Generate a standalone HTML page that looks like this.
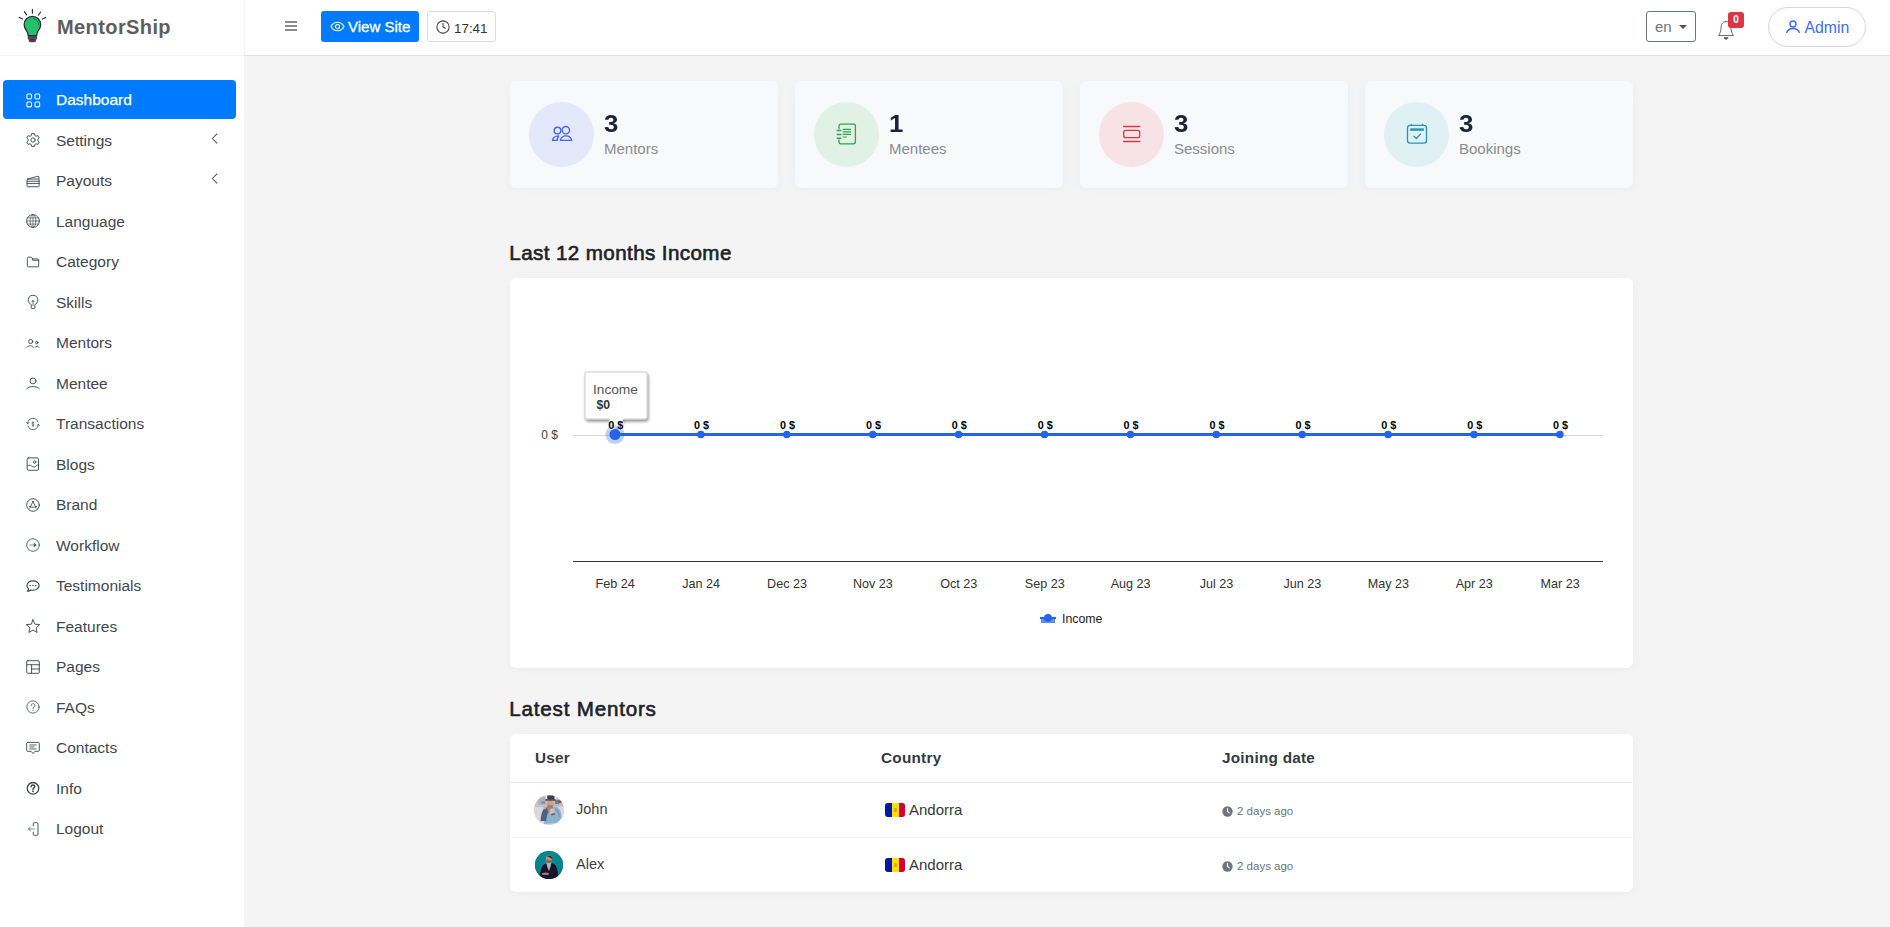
<!DOCTYPE html>
<html lang="en">
<head>
<meta charset="utf-8">
<title>MentorShip - Dashboard</title>
<style>
*{box-sizing:border-box;margin:0;padding:0}
html,body{width:1890px;height:927px;overflow:hidden}
body{font-family:"Liberation Sans",sans-serif;background:#f4f4f4;color:#212529;position:relative}
.sidebar{position:absolute;left:0;top:0;width:245px;height:927px;background:#fff;border-right:1px solid #f3f3f3}
.brand{position:absolute;left:0;top:0;width:244px;height:56px;border-bottom:1px solid #f2f2f2}
.brand svg{position:absolute;left:10px;top:0}
.brand .name{position:absolute;left:57px;top:14px;font-size:20px;font-weight:700;color:#5e5e5e;letter-spacing:.4px;line-height:26px}
.nav{position:absolute;left:3px;top:80px;width:233px;list-style:none}
.nav li{height:39px;margin-bottom:1.5px;border-radius:4px;position:relative;color:#3f474e;font-size:15.5px;line-height:40px;padding-left:53px}
.nav li.active{background:#007bff;color:#fff;-webkit-text-stroke:.25px #fff}
.nav li svg.ic{position:absolute;left:22.500px;top:12.500px;width:14px;height:14px;overflow:visible}
.nav li .arr{position:absolute;right:17.500px;top:12px;width:7.300px;height:11px}
.topbar{position:absolute;left:245px;top:0;width:1645px;height:56px;background:#fff;border-bottom:1px solid #dee2e6}
.burger{position:absolute;left:39px;top:20px}
.btn-view{position:absolute;left:76px;top:11px;width:98px;height:31px;background:#007bff;color:#fff;border-radius:3px;font-size:15px;line-height:31px;padding-left:27px;-webkit-text-stroke:.3px #fff}
.btn-view svg{position:absolute;left:9px;top:8px}
.btn-time{position:absolute;left:182px;top:11px;width:69px;height:31px;border:1px solid #d9dcdf;border-radius:3px;font-size:13.400px;line-height:33px;padding-left:26px;color:#333}
.btn-time svg{position:absolute;left:8px;top:8px}
.lang{position:absolute;left:1401px;top:11px;width:50px;height:31px;border:1px solid #6c757d;border-radius:3px;font-size:15px;color:#6c757d;line-height:30px;padding-left:8px}
.lang:after{content:"";position:absolute;left:32px;top:12.500px;border-left:4px solid transparent;border-right:4px solid transparent;border-top:4px solid #555}
.bell{position:absolute;left:1472px;top:19.500px}
.badge{position:absolute;left:1483px;top:12px;width:16px;height:16px;background:#dc3545;border-radius:3px;color:#fff;font-size:10px;font-weight:700;text-align:center;line-height:15px}
.admin{position:absolute;left:1523px;top:7px;width:98px;height:40px;border:1px solid #d5d8dc;border-radius:20px;color:#3b6ef8;font-size:15.800px;line-height:39px;padding-left:35.500px}
.admin svg{position:absolute;left:15.500px;top:11px}
.stat{position:absolute;top:81px;width:268px;height:107px;background:#f8f9fb;border-radius:6px;box-shadow:0 2px 12px rgba(0,0,0,.035)}
.stat .circ{position:absolute;left:19px;top:21px;width:65px;height:65px;border-radius:50%}
.stat .circ svg{position:absolute;left:22px;top:22px}
.stat .num{position:absolute;left:94px;top:27.500px;font-size:23.500px;font-weight:700;color:#1b2336;line-height:30px;transform:scaleX(1.1);transform-origin:0 0}
.stat .lab{position:absolute;left:94px;top:59px;font-size:15px;color:#888c94;line-height:18px}
h2{position:absolute;left:509.300px;font-size:20.600px;font-weight:400;color:#1d2228;line-height:24px;-webkit-text-stroke:.62px #1d2228;white-space:nowrap}
.card{position:absolute;left:510px;width:1123px;background:#fff;border-radius:6px;box-shadow:0 2px 12px rgba(0,0,0,.035)}

.th{position:absolute;top:14px;font-size:15.300px;font-weight:700;color:#343a40;line-height:20px;letter-spacing:.25px}
.hr{position:absolute;left:0;width:1123px;height:1px}
.av{position:absolute;left:24px;width:30px;height:30px;border-radius:50%;overflow:hidden}
.nm{position:absolute;left:66px;font-size:14.500px;color:#3a3f45;line-height:20px}
.fl{position:absolute;left:375px;width:20px;height:14px;border-radius:3px;overflow:hidden;background:#fedf00}
.fl i{position:absolute;left:0;top:0;width:7px;height:14px;background:#0018a8}
.fl u{position:absolute;right:0;top:0;width:6.500px;height:14px;background:#d50032}
.fl b{position:absolute;left:8.500px;top:5px;width:3.500px;height:4px;background:#d9a441;border-radius:1px}
.ct{position:absolute;left:399px;font-size:15px;color:#343a40;line-height:20px}
.dt{position:absolute;left:712px;font-size:11.500px;color:#6c757d;line-height:16px;padding-left:15px}
.dt svg{position:absolute;left:0;top:2.500px}
</style>
</head>
<body>
<div class="sidebar">
  <div class="brand">
    <svg width="40" height="56" viewBox="10 0 40 56"><g stroke="#33222f" stroke-width="1.100" fill="none" stroke-linecap="round"><path d="M32.400 9.200v4M24.400 11.600l2.200 3.300M40.600 12l-2.200 3.200M19.200 17.400l3.400 1.600M45.800 17.400l-3.500 1.700"/></g><path d="M32.400 16.300a8.300 8.300 0 0 1 8.300 8.300c0 3-1.500 4.800-2.700 6.600-.8 1.200-1.300 2.700-1.300 4.500h-8.600c0-1.800-.5-3.300-1.300-4.500-1.200-1.800-2.700-3.600-2.700-6.600a8.300 8.300 0 0 1 8.300-8.300z" fill="#23c16b" stroke="#33222f" stroke-width="1.200"/><path d="M33.500 18.600c3 .6 5 3 5.200 6" fill="none" stroke="#1c6b45" stroke-width="1" stroke-linecap="round"/><rect x="28.200" y="35.900" width="8.400" height="3.700" rx="1.300" fill="#6b5a6e" stroke="#33222f" stroke-width=".8"/><rect x="29.200" y="39.500" width="6.400" height="2.300" rx="1.100" fill="#4a3a4c" stroke="#33222f" stroke-width=".7"/><path d="M28.600 37.800h7.600" stroke="#33222f" stroke-width=".7"/></svg>
    <div class="name">MentorShip</div>
  </div>
  <ul class="nav" id="nav">
    <li class="active"><svg class="ic" viewBox="0 0 16 16" fill="none" stroke="currentColor" stroke-width="1.050" stroke-linecap="round"><g stroke-width="1.250"><rect x="1" y="1.200" width="5.300" height="5.600" rx="1.300"/><rect x="10.300" y="1.200" width="5.300" height="5.600" rx="1.300"/><rect x="1" y="10.300" width="5.300" height="5.600" rx="1.300"/><rect x="10.300" y="10.300" width="5.300" height="5.600" rx="1.300"/></g></svg>Dashboard</li>
    <li><svg class="ic" viewBox="0 0 16 16" fill="none" stroke="currentColor" stroke-width="1.050" stroke-linecap="round"><path d="M5.99 2.77 L6.44 0.66 L9.56 0.66 L10.01 2.77 L11.52 3.65 L13.57 2.98 L15.13 5.68 L13.53 7.12 L13.53 8.88 L15.13 10.32 L13.57 13.02 L11.52 12.35 L10.01 13.23 L9.56 15.34 L6.44 15.34 L5.99 13.23 L4.48 12.35 L2.43 13.02 L0.87 10.32 L2.47 8.88 L2.47 7.12 L0.87 5.68 L2.43 2.98 L4.48 3.65Z" stroke-linejoin="round"/><circle cx="8" cy="8" r="2.500"/></svg>Settings<svg class="arr" viewBox="0 0 8 12" fill="none" stroke="#495057" stroke-width="1.100" stroke-linecap="round" stroke-linejoin="round"><path d="M6.500 1L1.500 6l5 5"/></svg></li>
    <li><svg class="ic" viewBox="0 0 16 16" fill="none" stroke="currentColor" stroke-width="1.050" stroke-linecap="round"><rect x="1.200" y="5.800" width="13.800" height="8.800" rx="1"/><path d="M1.200 8.300h13.800M1.200 10.800h13.800M2 5.600L13.800 2.600q1-.2 1 .8v2.400"/></svg>Payouts<svg class="arr" viewBox="0 0 8 12" fill="none" stroke="#495057" stroke-width="1.100" stroke-linecap="round" stroke-linejoin="round"><path d="M6.500 1L1.500 6l5 5"/></svg></li>
    <li><svg class="ic" viewBox="0 0 16 16" fill="none" stroke="currentColor" stroke-width="1.050" stroke-linecap="round"><circle cx="8" cy="8" r="7.300"/><g stroke-width=".75"><ellipse cx="8" cy="8" rx="3.300" ry="7.300"/><path d="M8 1v14M1 8h14M2 4.500h12M2 11.500h12"/></g></svg>Language</li>
    <li><svg class="ic" viewBox="0 0 16 16" fill="none" stroke="currentColor" stroke-width="1.050" stroke-linecap="round"><path d="M1.500 3.500a1 1 0 0 1 1-1h3.200a1 1 0 0 1 .8.400l1 1.600h6a1 1 0 0 1 1 1v7a1 1 0 0 1-1 1h-11a1 1 0 0 1-1-1z"/><path d="M7.500 4.500v1.500h7"/></svg>Category</li>
    <li><svg class="ic" viewBox="0 0 16 16" fill="none" stroke="currentColor" stroke-width="1.050" stroke-linecap="round"><path d="M5.900 11A5.600 5.600 0 1 1 10.100 11V14.500a1 1 0 0 1-1 1H6.900a1 1 0 0 1-1-1Z" stroke-linejoin="round"/><path d="M8 6.200v6M6.700 7.600L8 6.200l1.300 1.400" stroke-width=".85"/></svg>Skills</li>
    <li><svg class="ic" viewBox="0 0 16 16" fill="none" stroke="currentColor" stroke-width="1.050" stroke-linecap="round"><circle cx="5.300" cy="6.300" r="2.400"/><circle cx="12.300" cy="7.600" r="1.400"/><path d="M.8 13.300c.8-1.400 2.200-2.100 4-2.100s3.200.7 4 2.100M10.300 13.300c.4-1 1.200-1.500 2.400-1.500s2 .5 2.400 1.500" stroke-width=".95" stroke-linecap="butt"/></svg>Mentors</li>
    <li><svg class="ic" viewBox="0 0 16 16" fill="none" stroke="currentColor" stroke-width="1.050" stroke-linecap="round"><circle cx="8" cy="5.600" r="3.400"/><path d="M.9 14.400c1.600-1.500 4-2.200 7.100-2.200s5.500.7 7.100 2.200"/></svg>Mentee</li>
    <li><svg class="ic" viewBox="0 0 16 16" fill="none" stroke="currentColor" stroke-width="1.050" stroke-linecap="round"><g stroke-width=".9"><path d="M2.200 10.300A6.200 6.200 0 0 0 14.200 8.600M13.800 5.700A6.200 6.200 0 0 0 1.800 7.400"/><path d="M.6 6.300l1.300 1.300 1.500-1.100M15.400 9.700l-1.300-1.300-1.500 1.100"/></g><path d="M9.200 6.700c-.2-.5-.6-.7-1.200-.7-.7 0-1.300.4-1.300 1 0 1.400 2.600.6 2.600 2.100 0 .6-.6 1-1.300 1-.6 0-1.100-.3-1.400-.8M8 5.200v5.700" stroke-width=".7"/></svg>Transactions</li>
    <li><svg class="ic" viewBox="0 0 16 16" fill="none" stroke="currentColor" stroke-width="1.050" stroke-linecap="round"><rect x="1.300" y="1" width="13" height="14.200" rx="1.500"/><circle cx="9.800" cy="5.800" r="1.400"/><path d="M1.500 10.200c2-1.200 3.600-1 5.200.2s2.800 1.400 4.300.2 2.300-1.700 3.500-1.900"/></svg>Blogs</li>
    <li><svg class="ic" viewBox="0 0 16 16" fill="none" stroke="currentColor" stroke-width="1.050" stroke-linecap="round"><circle cx="8" cy="8" r="7.200"/><path d="M8 4L4.400 11.600M8 4l3.600 7.600M3.800 9.700c2.700 1.300 5.700 1.300 8.400 0" stroke-width=".95"/><circle cx="8" cy="3.900" r=".7" fill="currentColor" stroke="none"/></svg>Brand</li>
    <li><svg class="ic" viewBox="0 0 16 16" fill="none" stroke="currentColor" stroke-width="1.050" stroke-linecap="round"><circle cx="8" cy="8" r="7.200" stroke-width=".95"/><path d="M4 8h6.500" stroke-width="1.500" stroke-opacity=".45" stroke-linecap="butt"/><path d="M9.600 6L11.800 8 9.600 10z" fill="currentColor" stroke-width=".6" stroke-linejoin="round"/></svg>Workflow</li>
    <li><svg class="ic" viewBox="0 0 16 16" fill="none" stroke="currentColor" stroke-width="1.050" stroke-linecap="round"><path d="M8 2.200c3.900 0 7 2.300 7 5.300s-3.100 5.300-7 5.300c-.9 0-1.700-.1-2.500-.3-1 .8-2.400 1.400-4 1.500.8-.9 1.300-1.800 1.400-2.800C1.700 10.200 1 8.900 1 7.500c0-3 3.100-5.300 7-5.300z" stroke-width="1.300" stroke-linejoin="round"/><circle cx="4.800" cy="7.500" r=".8" fill="currentColor" stroke="none"/><circle cx="8" cy="7.500" r=".8" fill="currentColor" stroke="none"/><circle cx="11.200" cy="7.500" r=".8" fill="currentColor" stroke="none"/></svg>Testimonials</li>
    <li><svg class="ic" viewBox="0 0 16 16" fill="none" stroke="currentColor" stroke-width="1.050" stroke-linecap="round"><path d="M8.00 0.90 L10.17 5.91 L15.61 6.43 L11.52 10.04 L12.70 15.37 L8.00 12.60 L3.30 15.37 L4.48 10.04 L0.39 6.43 L5.83 5.91Z" stroke-linejoin="round"/></svg>Features</li>
    <li><svg class="ic" viewBox="0 0 16 16" fill="none" stroke="currentColor" stroke-width="1.050" stroke-linecap="round"><rect x="0.800" y="0.800" width="14.400" height="14.400" rx="1.200"/><path d="M.8 5.400h14.400M6.400 5.400v9.800M6.400 10.300h8.800"/></svg>Pages</li>
    <li><svg class="ic" viewBox="0 0 16 16" fill="none" stroke="currentColor" stroke-width="1.050" stroke-linecap="round"><circle cx="8" cy="8" r="7" stroke-width=".9"/><path d="M5.800 6.300c0-1.300 1-2.100 2.200-2.100s2.200.8 2.200 2c0 1.700-2.200 1.700-2.200 3.600" stroke-width=".9"/><circle cx="8" cy="11.800" r=".6" fill="currentColor" stroke="none"/></svg>FAQs</li>
    <li><svg class="ic" viewBox="0 0 16 16" fill="none" stroke="currentColor" stroke-width="1.050" stroke-linecap="round"><path d="M1.800 1.600h12.400a1 1 0 0 1 1 1v8.200a1 1 0 0 1-1 1H10.200L8 14.400l-2.200-2.600H1.800a1 1 0 0 1-1-1V2.600a1 1 0 0 1 1-1z" stroke-linejoin="round"/><path d="M4.300 4.500h7.400M4.300 6.800h5M4.300 9.100h7.400" stroke-width=".95"/></svg>Contacts</li>
    <li><svg class="ic" viewBox="0 0 16 16" fill="none" stroke="currentColor" stroke-width="1.050" stroke-linecap="round"><circle cx="8" cy="8.300" r="6.600" stroke-width="1.500"/><path d="M5.900 6.700c0-1.300.9-2.100 2.100-2.100s2.100.7 2.100 1.800c0 1.500-2.100 1.500-2.100 3.100" stroke-width="1.700"/><circle cx="8" cy="11.700" r="1" fill="currentColor" stroke="none"/></svg>Info</li>
    <li><svg class="ic" viewBox="0 0 16 16" fill="none" stroke="currentColor" stroke-width="1.050" stroke-linecap="round"><path d="M8.300 4.400V2a1.200 1.200 0 0 1 1.200-1.200h3a1.200 1.200 0 0 1 1.200 1.200v12a1.200 1.200 0 0 1-1.200 1.200h-3a1.200 1.200 0 0 1-1.200-1.200v-2.400"/><path d="M10.200 8H3.600" stroke-width="1.500" stroke-opacity=".45" stroke-linecap="butt"/><path d="M4.800 6.100L2.800 8l2 1.900"/></svg>Logout</li>
  </ul>
</div>
<div class="topbar">
  <svg class="burger" width="14" height="12" viewBox="0 0 14 12"><path d="M1 2h12M1 6h12M1 10h12" stroke="#666" stroke-width="1.300"/></svg>
  <div class="btn-view"><svg width="15" height="15" viewBox="0 0 16 16" fill="none" stroke="#fff" stroke-width="1.200"><path d="M1 8s2.500-4.500 7-4.500S15 8 15 8s-2.500 4.500-7 4.500S1 8 1 8z"/><circle cx="8" cy="8" r="2.200"/></svg>View Site</div>
  <div class="btn-time"><svg width="14" height="14" viewBox="0 0 16 16" fill="none" stroke="#444" stroke-width="1.200"><circle cx="8" cy="8" r="7"/><path d="M8 3.500V8l3 1.800"/></svg>17:41</div>
  <div class="lang">en</div>
  <svg class="bell" width="18" height="22" viewBox="0 0 18 22" fill="none" stroke="#5f6873" stroke-width=".95"><path d="M9 1.500c-3 0-4.700 2.200-4.900 5.500-.2 4-1 6.500-2.600 8.500h15c-1.600-2-2.400-4.500-2.600-8.500C13.700 3.700 12 1.500 9 1.500z"/><path d="M7 17.500c.3 1.200 1 1.800 2 1.800s1.700-.6 2-1.800z" fill="#5a6270"/></svg>
  <div class="badge">0</div>
  <div class="admin"><svg width="16" height="16" viewBox="0 0 16 16" fill="none" stroke="#3b6ef8" stroke-width="1.400"><circle cx="8" cy="5" r="3"/><path d="M1.500 14c1-3 3.500-4.500 6.500-4.500s5.500 1.500 6.500 4.500"/></svg>Admin</div>
</div>

<div class="stat" style="left:510px"><div class="circ" style="background:#e3e8fb"><svg width="65" height="65" viewBox="0 0 65 65" fill="none" stroke-linecap="round" stroke-linejoin="round" style="position:absolute;left:0;top:0"><g stroke="#4263f5" stroke-width="1.350"><circle cx="28.500" cy="28.500" r="3.300"/><circle cx="36.800" cy="28.200" r="3.700"/><path d="M31.400 38.400a5.600 4.500 0 0 1 11.200 0z"/><path d="M23.500 38.400c.4-2.600 2.600-4.300 6.100-4.500-.8 1.200-1.200 2.800-1.300 4.500z"/></g></svg></div><div class="num">3</div><div class="lab">Mentors</div></div>
<div class="stat" style="left:795px"><div class="circ" style="background:#e2f1e5"><svg width="65" height="65" viewBox="0 0 65 65" fill="none" stroke-linecap="round" stroke-linejoin="round" style="position:absolute;left:0;top:0"><g stroke="#28a745" stroke-width="1.300"><path d="M25 26.500v-2.300a2 2 0 0 1 2-2h12.400a2 2 0 0 1 2 2v15.600a2 2 0 0 1-2 2H27a2 2 0 0 1-2-2v-2"/><path d="M29.200 27.400h7.400M29.200 29.900h7.400M29.200 32.400h7.400M29.200 35h3.200" stroke-width="1.100"/><path d="M23.200 28.600h3.600M23.200 32.400h3.600M23.200 36.200h3.600" stroke-width="1.500"/></g></svg></div><div class="num">1</div><div class="lab">Mentees</div></div>
<div class="stat" style="left:1080px"><div class="circ" style="background:#f7e3e6"><svg width="65" height="65" viewBox="0 0 65 65" fill="none" stroke-linecap="round" stroke-linejoin="round" style="position:absolute;left:0;top:0"><g stroke="#dc3545" stroke-width="1.300"><path d="M24.600 24.500h16.200M24.600 39.500h16.200"/><rect x="24.700" y="28.300" width="16" height="7.400" rx="2"/></g></svg></div><div class="num">3</div><div class="lab">Sessions</div></div>
<div class="stat" style="left:1365px"><div class="circ" style="background:#e0f1f4"><svg width="65" height="65" viewBox="0 0 65 65" fill="none" stroke-linecap="round" stroke-linejoin="round" style="position:absolute;left:0;top:0"><g stroke="#2196b6" stroke-width="1.300"><rect x="23.500" y="23.400" width="19" height="17.800" rx="2.600"/><path d="M27.500 22.300v1M38.500 22.300v1"/><rect x="26.600" y="26.700" width="13" height="1.800" fill="#2196b6" stroke-width=".6"/><path d="M29.900 34.200l2.500 2.300 4.100-4.300" stroke-width="1.200"/></g></svg></div><div class="num">3</div><div class="lab">Bookings</div></div>

<h2 style="top:241px;letter-spacing:.4px" id="h1">Last 12 months Income</h2>
<div class="card" style="top:278px;height:390px" id="chart">
<svg width="1123" height="389" viewBox="0 0 1123 389" style="position:absolute;left:0;top:0;font-family:'Liberation Sans',sans-serif">
<defs><filter id="sh" x="-20%" y="-20%" width="150%" height="160%"><feDropShadow dx="1" dy="2" stdDeviation="1.5" flood-color="#000" flood-opacity=".45"/></filter></defs>
<rect x="63" y="157" width="1030" height="1" fill="#d6d6d6"/>
<rect x="63" y="283" width="1030" height="1" fill="#333333"/>
<text x="48" y="160.500" text-anchor="end" font-size="12" fill="#444444">0 $</text>
<path d="M105 156.500H1049.900" stroke="#2563eb" stroke-width="3" fill="none"/>
<text x="105.2" y="309.500" text-anchor="middle" font-size="12.600" fill="#333333">Feb 24</text>
<circle cx="190.9" cy="156.500" r="3.800" fill="#2563eb"/>
<text x="191.1" y="309.500" text-anchor="middle" font-size="12.600" fill="#333333">Jan 24</text>
<circle cx="276.8" cy="156.500" r="3.800" fill="#2563eb"/>
<text x="277" y="309.500" text-anchor="middle" font-size="12.600" fill="#333333">Dec 23</text>
<circle cx="362.7" cy="156.500" r="3.800" fill="#2563eb"/>
<text x="362.9" y="309.500" text-anchor="middle" font-size="12.600" fill="#333333">Nov 23</text>
<circle cx="448.6" cy="156.500" r="3.800" fill="#2563eb"/>
<text x="448.8" y="309.500" text-anchor="middle" font-size="12.600" fill="#333333">Oct 23</text>
<circle cx="534.5" cy="156.500" r="3.800" fill="#2563eb"/>
<text x="534.7" y="309.500" text-anchor="middle" font-size="12.600" fill="#333333">Sep 23</text>
<circle cx="620.4" cy="156.500" r="3.800" fill="#2563eb"/>
<text x="620.6" y="309.500" text-anchor="middle" font-size="12.600" fill="#333333">Aug 23</text>
<circle cx="706.3" cy="156.500" r="3.800" fill="#2563eb"/>
<text x="706.5" y="309.500" text-anchor="middle" font-size="12.600" fill="#333333">Jul 23</text>
<circle cx="792.2" cy="156.500" r="3.800" fill="#2563eb"/>
<text x="792.4" y="309.500" text-anchor="middle" font-size="12.600" fill="#333333">Jun 23</text>
<circle cx="878.1" cy="156.500" r="3.800" fill="#2563eb"/>
<text x="878.3" y="309.500" text-anchor="middle" font-size="12.600" fill="#333333">May 23</text>
<circle cx="964" cy="156.500" r="3.800" fill="#2563eb"/>
<text x="964.2" y="309.500" text-anchor="middle" font-size="12.600" fill="#333333">Apr 23</text>
<circle cx="1049.9" cy="156.500" r="3.800" fill="#2563eb"/>
<text x="1050.1" y="309.500" text-anchor="middle" font-size="12.600" fill="#333333">Mar 23</text>
<g><path d="M77 94h58a2 2 0 0 1 2 2v43a2 2 0 0 1-2 2H113.500L105 152.500L99 141H77a2 2 0 0 1-2-2V96a2 2 0 0 1 2-2z" fill="#ffffff" stroke="#cccccc" stroke-width="1" filter="url(#sh)"/>
<text x="83" y="115.800" font-size="13.700" fill="#555555">Income</text><text x="86.500" y="130.600" font-size="12.300" font-weight="700" fill="#333333">$0</text></g>
<circle cx="105" cy="156.500" r="9.500" fill="#2563eb" fill-opacity=".3"/><circle cx="105" cy="156.500" r="5.500" fill="#2563eb"/>
<text x="105.7" y="150.500" text-anchor="middle" font-size="10.800" font-weight="700" fill="#000000" stroke="#ffffff" stroke-width="2" paint-order="stroke" stroke-opacity=".6">0 $</text>
<text x="191.6" y="150.500" text-anchor="middle" font-size="10.800" font-weight="700" fill="#000000" stroke="#ffffff" stroke-width="2" paint-order="stroke" stroke-opacity=".6">0 $</text>
<text x="277.5" y="150.500" text-anchor="middle" font-size="10.800" font-weight="700" fill="#000000" stroke="#ffffff" stroke-width="2" paint-order="stroke" stroke-opacity=".6">0 $</text>
<text x="363.4" y="150.500" text-anchor="middle" font-size="10.800" font-weight="700" fill="#000000" stroke="#ffffff" stroke-width="2" paint-order="stroke" stroke-opacity=".6">0 $</text>
<text x="449.3" y="150.500" text-anchor="middle" font-size="10.800" font-weight="700" fill="#000000" stroke="#ffffff" stroke-width="2" paint-order="stroke" stroke-opacity=".6">0 $</text>
<text x="535.2" y="150.500" text-anchor="middle" font-size="10.800" font-weight="700" fill="#000000" stroke="#ffffff" stroke-width="2" paint-order="stroke" stroke-opacity=".6">0 $</text>
<text x="621.1" y="150.500" text-anchor="middle" font-size="10.800" font-weight="700" fill="#000000" stroke="#ffffff" stroke-width="2" paint-order="stroke" stroke-opacity=".6">0 $</text>
<text x="707" y="150.500" text-anchor="middle" font-size="10.800" font-weight="700" fill="#000000" stroke="#ffffff" stroke-width="2" paint-order="stroke" stroke-opacity=".6">0 $</text>
<text x="792.9" y="150.500" text-anchor="middle" font-size="10.800" font-weight="700" fill="#000000" stroke="#ffffff" stroke-width="2" paint-order="stroke" stroke-opacity=".6">0 $</text>
<text x="878.8" y="150.500" text-anchor="middle" font-size="10.800" font-weight="700" fill="#000000" stroke="#ffffff" stroke-width="2" paint-order="stroke" stroke-opacity=".6">0 $</text>
<text x="964.7" y="150.500" text-anchor="middle" font-size="10.800" font-weight="700" fill="#000000" stroke="#ffffff" stroke-width="2" paint-order="stroke" stroke-opacity=".6">0 $</text>
<text x="1050.6" y="150.500" text-anchor="middle" font-size="10.800" font-weight="700" fill="#000000" stroke="#ffffff" stroke-width="2" paint-order="stroke" stroke-opacity=".6">0 $</text>
<rect x="531" y="340" width="14" height="5" fill="#2563eb" fill-opacity=".72"/><path d="M530 340h16" stroke="#2563eb" stroke-width="2.200"/><circle cx="538" cy="339.800" r="3.900" fill="#2563eb"/>
<text x="552" y="345" font-size="12.300" fill="#222222">Income</text>
</svg>
</div>
<h2 style="top:697px;letter-spacing:.8px" id="h2b">Latest Mentors</h2>
<div class="card" style="top:734px;height:158px" id="table">
<div class="th" style="left:25px">User</div><div class="th" style="left:371px">Country</div><div class="th" style="left:712px">Joining date</div>
<div class="hr" style="top:48px;background:#e9ecef"></div><div class="hr" style="top:103px;background:#f1f3f5"></div>
<div class="av" style="top:61px;background:#c9ccd1"><svg width="30" height="30" viewBox="0 0 30 30"><defs><filter id="bl" x="-10%" y="-10%" width="120%" height="120%"><feGaussianBlur stdDeviation=".55"/></filter></defs><g filter="url(#bl)"><rect x="-2" y="-2" width="34" height="34" fill="#d9d9d9"/><rect x="-2" y="-2" width="34" height="14" fill="#c3c6cc"/><rect x="4" y="2" width="8" height="8" fill="#aab3c6"/><rect x="7.500" y="6.500" width="3.500" height="2" fill="#7d8794"/><rect x="20" y="2" width="10" height="9" fill="#b9bcc4"/><rect x="21" y="5" width="4" height="4" fill="#6f7f96"/><rect x="24.500" y="5.300" width="3" height="2.800" fill="#a0453a"/><rect x="11.500" y="-1" width="2" height="5" fill="#f2f3f6"/><rect x="20" y="-1" width="2.500" height="5" fill="#eef0f4"/><path d="M10 29c0-6 1-12 3-15l4-2.500 6 .5c3 1.500 4.500 6 4.500 11l-3 5z" fill="#8db1cf"/><path d="M6.500 26c.3-5 1.500-10 3.500-12.500l3.500-1.500 1.500 3c-1.500 3-2.500 7-2.800 11z" fill="#48637e"/><path d="M12.500 11.500h6.500l-1.500 5-3 2z" fill="#8b8d90"/><ellipse cx="16.200" cy="8.600" rx="3.600" ry="3.500" fill="#cfa48f"/><path d="M13 9.500c.5 2.700 1.700 3.800 3.200 3.800s2.700-1.100 3.200-3.800c-1.200 1-5.200 1-6.400 0z" fill="#b27b5c"/><rect x="13.300" y=".5" width="7.200" height="4" fill="#3b3d55"/><path d="M11.300 4.200h10.200v1.500H11.300z" fill="#4d4038"/><ellipse cx="10.500" cy="13" rx="1.600" ry="1.400" fill="#d3a590"/><ellipse cx="18" cy="16.200" rx="2.500" ry="2.800" fill="#e2b8a8"/><path d="M17 19l3.500-1 .5 1.500-3.500 1z" fill="#6b5348"/><path d="M21 14c2.500 1 4 4 4.300 8" stroke="#6f9cc0" stroke-width="1.500" fill="none"/></g></svg></div><div class="nm" style="top:65px">John</div>
<div class="av" style="top:117px;left:25px;width:28px;height:28px;background:#0d8a8e"><svg width="28" height="28" viewBox="0 0 28 28"><defs><radialGradient id="tg" cx="50%" cy="40%" r="65%"><stop offset="0" stop-color="#0b9199"/><stop offset=".7" stop-color="#07828b"/><stop offset="1" stop-color="#046570"/></radialGradient><filter id="bl2" x="-10%" y="-10%" width="120%" height="120%"><feGaussianBlur stdDeviation=".5"/></filter></defs><rect width="28" height="28" fill="url(#tg)"/><g filter="url(#bl2)"><path d="M4.300 29c.2-4 1-8.500 2.300-12 .7-2.300 2-3.700 4.600-4.400l6-.3c2.400.6 3.700 2 4.400 4.200 1.300 3.800 1.900 8.500 2 12.500z" fill="#121826"/><path d="M11.300 11.500h5.100l-.8 4-1.600 4.500-1.900-4.500z" fill="#aeb2c6"/><ellipse cx="14" cy="8" rx="3.100" ry="3.400" fill="#c28d72"/><path d="M12 5.600c1-1.200 3.600-1.500 5 .4.400.8.400 1.800.2 2.600-.6-1.500-2.700-2.500-5.200-3z" fill="#3a2a25"/><path d="M11.200 8.800c.3 2.300 1.400 3.200 2.800 3.200s2.500-.9 2.800-3.200c-1.200 1-4.400 1-5.600 0z" fill="#8a5c45"/><path d="M6.800 22.300c2.300-1 5-1 7.200-.3l-.3 1.700c-2.300.4-4.800.4-6.700 0z" fill="#a9755b"/></g></svg></div><div class="nm" style="top:120px">Alex</div>
<div class="fl" style="top:69px"><i></i><b></b><u></u></div><div class="ct" style="top:66px">Andorra</div>
<div class="fl" style="top:124px"><i></i><b></b><u></u></div><div class="ct" style="top:121px">Andorra</div>
<div class="dt" style="top:69px"><svg width="11" height="11" viewBox="0 0 12 12"><circle cx="6" cy="6" r="5.600" fill="#6c757d"/><path d="M6 2.800V6l2 1.500" stroke="#fff" stroke-width="1.300" fill="none" stroke-linecap="round"/></svg>2 days ago</div>
<div class="dt" style="top:124px"><svg width="11" height="11" viewBox="0 0 12 12"><circle cx="6" cy="6" r="5.600" fill="#6c757d"/><path d="M6 2.800V6l2 1.500" stroke="#fff" stroke-width="1.300" fill="none" stroke-linecap="round"/></svg>2 days ago</div>
</div>
</body>
</html>
